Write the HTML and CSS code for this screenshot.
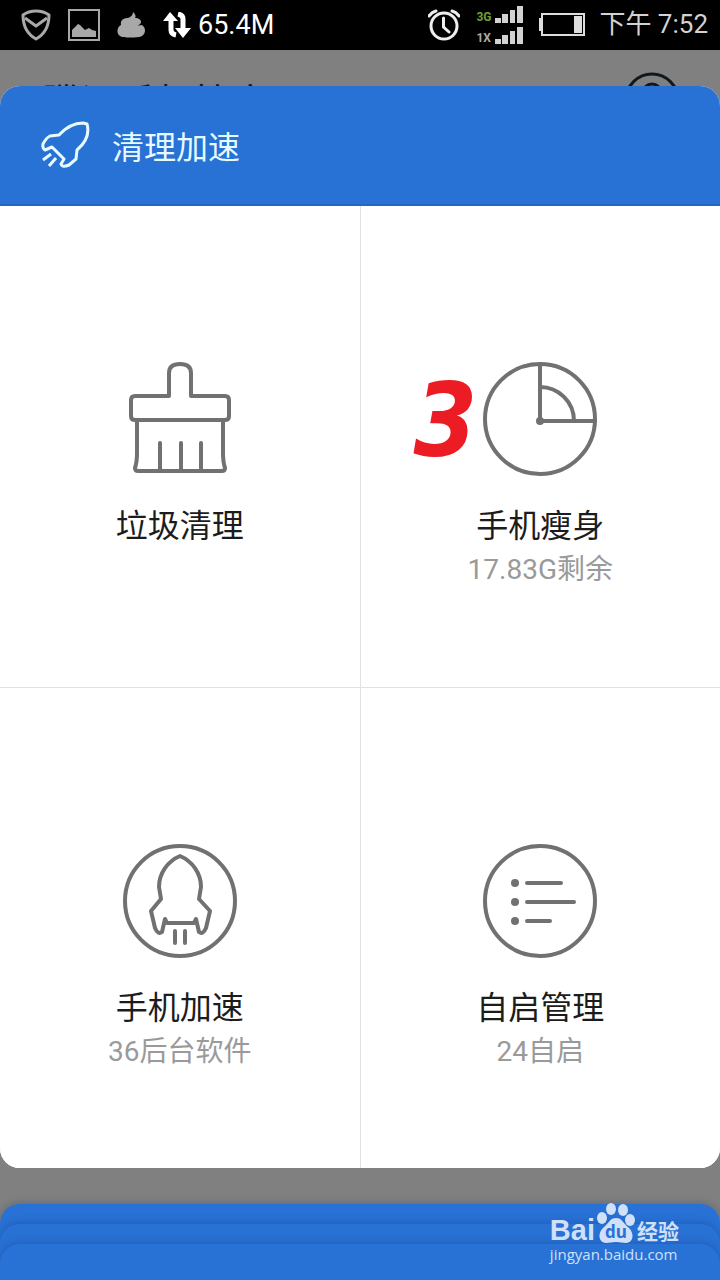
FILE: index.html
```html
<!DOCTYPE html>
<html lang="zh-CN">
<head>
<meta charset="utf-8">
<meta name="viewport" content="width=device-width, initial-scale=1">
<title>清理加速</title>
<link rel="stylesheet" href="styles.css">
</head>
<body>
<div class="screen">
  <div class="status">
    <div class="status-group status-left">
      <svg width="30" height="32" viewBox="0 0 30 32" fill="none" stroke="#a8a8a8" stroke-width="3" stroke-linejoin="round"><path d="M15 2C11 2 6 3 2 6C2 17 6 25 15 30C24 25 28 17 28 6C24 3 19 2 15 2Z"/><path d="M4 9L15 17L26 9"/></svg>
      <svg width="32" height="32" viewBox="0 0 32 32"><rect x="1" y="1" width="30" height="30" fill="none" stroke="#a8a8a8" stroke-width="2"/><path d="M4 28V21L10 15L12 16L17 21L21 19L24 21L28 22V28Z" fill="#a8a8a8"/></svg>
      <svg width="28" height="26" viewBox="0 0 28 26" fill="#a8a8a8"><path d="M16 0C19 3 19 5 18 6C22 6 24 8 24 10C24 12 21 14 18 14L25 13C29 16 29 21 25 24C22 26 5 26 3 24C-1 21 0 15 4 13C3 8 7 6 11 6C14 5 16 3 16 0Z"/></svg>
      <div class="status-group traffic">
        <svg width="30" height="26" viewBox="0 0 28 26" fill="none" stroke="#fff" stroke-width="5"><path d="M8 5V18Q8 22 13 23M20 20V7Q20 3 15 2"/><path d="M0 9L7 0L15 9ZM12 16L20 26L28 16Z" fill="#fff" stroke="none"/></svg>
        <span>65.4M</span>
      </div>
    </div>
    <div class="status-group status-right">
      <div class="status-group indicators">
        <svg width="32" height="32" viewBox="0 0 32 32" fill="none" stroke="#eee" stroke-width="3" stroke-linecap="round"><circle cx="16" cy="17" r="13"/><path d="M15.500 9V18L21 23M1 7Q4 3 8 2M24 2Q28 3 31 7"/></svg>
        <div class="signals">
          <div class="signal"><span class="net net-3g">3G</span><svg width="28" height="17" viewBox="0 0 28 17" fill="#d2d2d2"><path d="M0 12H6V17H0ZM7 8H13V17H7ZM15 4H20V17H15ZM22 0H28V17H22Z"/></svg></div>
          <div class="signal"><span class="net">1X</span><svg width="28" height="17" viewBox="0 0 28 17" fill="#d2d2d2"><path d="M0 12H6V17H0ZM7 8H13V17H7ZM15 4H20V17H15ZM22 0H28V17H22Z"/></svg></div>
        </div>
        <svg width="46" height="24" viewBox="0 0 46 24"><path d="M0 5H3V18H0Z" fill="#ddd"/><rect x="3" y="1" width="42" height="21" fill="none" stroke="#ddd" stroke-width="2"/><rect x="35" y="3" width="8" height="17" fill="#ddd"/></svg>
      </div>
      <span class="clock">下午 7:52</span>
    </div>
  </div>

  <div class="backdrop">
    <span class="backdrop-title">腾讯手机管家</span>
    <svg width="56" height="56" viewBox="0 0 56 56" fill="none" stroke="#111820" stroke-width="3"><circle cx="28" cy="28" r="26"/><circle cx="28" cy="21" r="9"/><path d="M11 46Q14 33 28 33T45 46"/></svg>
  </div>

  <main class="sheet">
    <header class="sheet-head">
      <svg width="50" height="48" viewBox="0 0 50 48" fill="none" stroke="#e6fbff" stroke-width="3" stroke-linejoin="round" stroke-linecap="round"><path d="M11 26L4 29Q1 27 2 23Q5 17 9 15L18 14Q29 2 42 2L46 3Q50 17 36 29L35 38L28 44Q21 47 20 43L23 38Z"/><path d="M10 33L2 39M15 37L8 45" stroke-linecap="butt"/></svg>
      <h1 class="sheet-title">清理加速</h1>
    </header>
    <div class="grid">
      <button type="button" class="tile">
        <svg class="icon" viewBox="0 0 114 114"><path d="M46 34V11Q46 2 57 2T68 11V34H102Q106 34 106 38V54Q106 58 102 58H12Q8 58 8 54V38Q8 34 12 34H46M14 58V91Q14 100 12 106Q12 109 15 109H99Q102 109 102 106Q100 100 100 91V58M37 81V108M58 81V108M78 81V108"/></svg>
        <span class="label">垃圾清理</span>
      </button>
      <button type="button" class="tile">
        <span class="mark">3</span>
        <svg class="icon" viewBox="0 0 114 114"><circle cx="57" cy="57" r="55"/><path d="M57 2V59H112M57 25A34 34 0 0 1 91 59"/><circle class="dot" cx="57" cy="59" r="4"/></svg>
        <span class="label">手机瘦身</span>
        <span class="sub">17.83G剩余</span>
      </button>
      <button type="button" class="tile">
        <svg class="icon" viewBox="0 0 114 114"><circle cx="57" cy="57" r="55"/><path d="M57 12C45 17 36 29 36 43L38 55L28 67L32 84Q35 91 39 88L42 75L44 79H71L73 75L76 88Q80 91 83 84L87 67L76 55L78 43C78 29 69 17 57 12ZM52 87V99M62 87V99"/></svg>
        <span class="label">手机加速</span>
        <span class="sub">36后台软件</span>
      </button>
      <button type="button" class="tile">
        <svg class="icon" viewBox="0 0 114 114"><circle cx="57" cy="57" r="55"/><path d="M44 39H78M44 58H91M44 77H67"/><circle class="dot" cx="32" cy="39" r="4"/><circle class="dot" cx="32" cy="58" r="4"/><circle class="dot" cx="32" cy="77" r="4"/></svg>
        <span class="label">自启管理</span>
        <span class="sub">24自启</span>
      </button>
    </div>
  </main>

  <footer class="stack">
    <div class="card"></div>
    <div class="card"></div>
    <div class="card card-front"></div>
  </footer>

  <div class="watermark">
    <div class="brand">
      <span class="bai">Bai</span>
      <span class="paw">
        <svg width="38" height="42" viewBox="0 0 38 42" fill="#cfe0f8"><ellipse cx="5" cy="16" rx="5" ry="6"/><ellipse cx="14" cy="7" rx="5" ry="6"/><ellipse cx="26" cy="8" rx="5" ry="6"/><ellipse cx="33" cy="18" rx="5" ry="6"/><path d="M19 16C25 16 26 21 32 26C38 32 36 41 29 41C25 41 23 40 19 40C15 40 13 41 9 41C2 41 0 32 6 26C12 21 13 16 19 16Z"/></svg>
        <span class="du">du</span>
      </span>
      <span class="jy">经验</span>
    </div>
    <div class="url">jingyan.baidu.com</div>
  </div>
</div>
</body>
</html>
```
FILE: styles.css
```css
* { box-sizing: border-box; }
body {
  margin: 0;
  font-family: Roboto, "Noto Sans CJK SC", sans-serif;
  background: #808080;
}
.screen {
  position: relative;
  display: flex;
  flex-direction: column;
  min-height: 100vh;
  overflow: hidden;
}
svg { display: block; flex: none; }

.status {
  display: flex;
  justify-content: space-between;
  align-items: center;
  height: 50px;
  padding: 0 12px 0 21px;
  background: #000;
  color: #fff;
}
.status-group { display: flex; align-items: center; }
.status-left { gap: 17px; font-size: 27px; }
.status-left .traffic { gap: 6px; }
.status-right { gap: 14px; }
.indicators { gap: 16px; }
.signals { display: flex; flex-direction: column; gap: 4px; }
.signal { display: flex; align-items: flex-end; gap: 3px; }
.net {
  width: 16px;
  font-size: 12px;
  line-height: 12px;
  font-weight: 700;
  color: #aaa;
}
.net-3g { color: #6fa03c; }
.clock {
  font-size: 26px;
  line-height: 30px;
  padding-bottom: 3px;
  color: #d2d2d2;
}

.backdrop {
  display: flex;
  justify-content: space-between;
  align-items: flex-start;
  height: 72px;
  margin-bottom: -36px;
  padding: 22px 40px 0 42px;
}
.backdrop-title {
  padding-top: 11px;
  font-size: 38px;
  line-height: 40px;
  color: #0b1a33;
}

.sheet {
  position: relative;
  display: flex;
  flex-direction: column;
  flex: 1;
  overflow: hidden;
  border-radius: 20px;
  background: #fff;
}
.sheet-head {
  display: flex;
  align-items: center;
  gap: 21px;
  height: 120px;
  padding: 0 41px;
  background: #2871d5;
  border-bottom: 2px solid #2468c6;
}
.sheet-title {
  margin: 0;
  font-size: 32px;
  font-weight: 400;
  color: #e6fbff;
}
.grid {
  display: grid;
  grid-template-columns: 1fr 1fr;
  grid-template-rows: 1fr 1fr;
  gap: 1px;
  flex: 1;
  background: #e2e2e2;
}
.tile {
  position: relative;
  display: flex;
  flex-direction: column;
  align-items: center;
  justify-content: flex-start;
  margin: 0;
  padding: 156px 0 60px;
  border: 0;
  background: #fff;
  font-family: inherit;
}
.icon {
  width: 114px;
  height: 114px;
  fill: none;
  stroke: #717171;
  stroke-width: 4;
  stroke-linecap: round;
  stroke-linejoin: round;
}
.dot { fill: #717171; stroke: none; }
.label {
  margin-top: 26px;
  font-size: 32px;
  line-height: 48px;
  color: #1c1c1c;
}
.sub {
  font-size: 28px;
  line-height: 40px;
  color: #9a9a9a;
}
.mark {
  position: absolute;
  top: 158px;
  right: calc(50% + 63px);
  font: italic 700 102px/114px "DejaVu Sans Condensed", "DejaVu Sans", sans-serif;
  color: #ec1c24;
}

.stack {
  display: flex;
  flex-direction: column;
  margin-top: 36px;
}
.card {
  height: 40px;
  margin-bottom: -20px;
  border-radius: 20px 20px 0 0;
  background: #2871d5;
  box-shadow: 0 -1px 8px rgba(20, 50, 110, 0.3);
}
.card-front { height: 36px; margin-bottom: 0; }

.watermark {
  position: absolute;
  right: 41px;
  bottom: 16px;
  color: #cfe0f8;
  font-family: "Open Sans", "Noto Sans CJK SC", sans-serif;
}
.brand { display: flex; align-items: flex-end; gap: 2px; }
.bai {
  font-family: "Liberation Sans", sans-serif;
  font-size: 29px;
  line-height: 28px;
  font-weight: 700;
}
.paw { position: relative; }
.du {
  position: absolute;
  inset: auto 0 1px;
  text-align: center;
  font-size: 17px;
  line-height: 22px;
  font-weight: 700;
  color: #2871d5;
}
.jy { font-size: 21px; line-height: 26px; font-weight: 700; }
.url { font-size: 15px; line-height: 20px; }
```
